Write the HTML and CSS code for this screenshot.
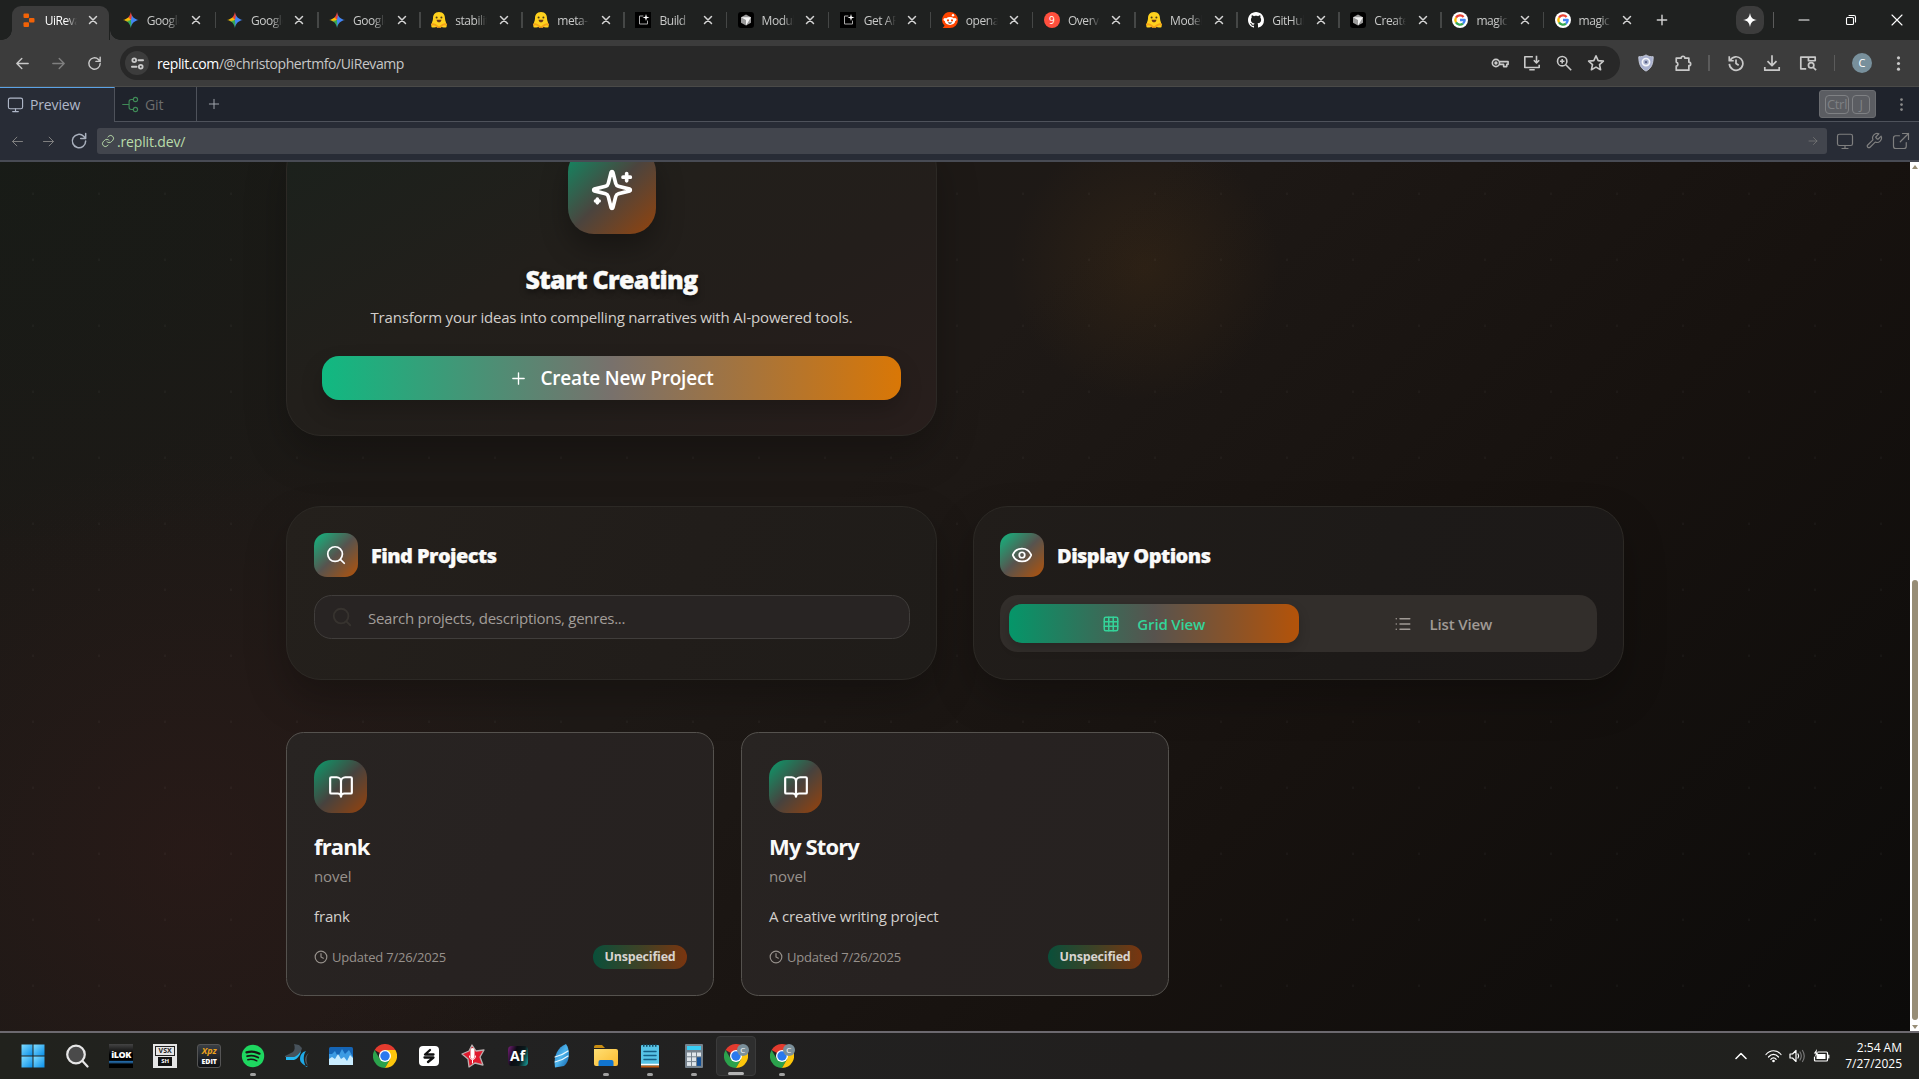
FILE: index.html
```html
<!DOCTYPE html>
<html lang="en">
<head>
<meta charset="utf-8">
<title>UiRevamp</title>
<link rel="stylesheet" href="styles.css">
</head>
<body>
<svg class="sprite" aria-hidden="true">
  <defs>
    <linearGradient id="win" x1="0" y1="0" x2="1" y2="1"><stop offset="0" stop-color="#7fdcff"/><stop offset="1" stop-color="#0a8fe8"/></linearGradient>
    <linearGradient id="feather" x1="0" y1="0" x2="1" y2="1"><stop offset="0" stop-color="#1c6fb8"/><stop offset=".5" stop-color="#4fb6ee"/><stop offset="1" stop-color="#0d5da8"/></linearGradient>
    <linearGradient id="folder" x1="0" y1="0" x2="1" y2="1"><stop offset="0" stop-color="#ffdf73"/><stop offset="1" stop-color="#fbb92e"/></linearGradient>
  </defs>
  <symbol id="x" viewBox="0 0 10 10"><path d="M1.500 1.500l7 7M8.500 1.500l-7 7"/></symbol>
  <symbol id="plus" viewBox="0 0 24 24"><path d="M12 4v16M4 12h16"/></symbol>
  <symbol id="left" viewBox="0 0 24 24"><path d="M20 12H4M11 5l-7 7 7 7"/></symbol>
  <symbol id="right" viewBox="0 0 24 24"><path d="M4 12h16M13 5l7 7-7 7"/></symbol>
  <symbol id="reload" viewBox="0 0 24 24"><path d="M20 12a8 8 0 1 1-2.400-5.700L20 9M20 3v6h-6"/></symbol>
  <symbol id="dots" viewBox="0 0 24 24"><g fill="currentColor" stroke="none"><circle cx="12" cy="4" r="2.200"/><circle cx="12" cy="12" r="2.200"/><circle cx="12" cy="20" r="2.200"/></g></symbol>
  <symbol id="search" viewBox="0 0 24 24"><circle cx="11" cy="11" r="8"/><path d="M21 21l-4.300-4.300"/></symbol>
  <symbol id="monitor" viewBox="0 0 24 24"><rect x="2" y="3" width="20" height="15" rx="2.500"/><path d="M8 22h8M12 18v4"/></symbol>
  <symbol id="book" viewBox="0 0 24 24"><path d="M12 7v14M3 18a1 1 0 0 1-1-1V4a1 1 0 0 1 1-1h5a4 4 0 0 1 4 4 4 4 0 0 1 4-4h5a1 1 0 0 1 1 1v13a1 1 0 0 1-1 1h-6a3 3 0 0 0-3 3 3 3 0 0 0-3-3z"/></symbol>
  <symbol id="clock" viewBox="0 0 24 24"><circle cx="12" cy="12" r="10"/><path d="M12 6v6l4 2"/></symbol>
  <symbol id="sparkles" viewBox="0 0 24 24"><path d="M9.940 15.500A2 2 0 0 0 8.500 14.060l-6.140-1.580a.5.5 0 0 1 0-.96L8.500 9.940A2 2 0 0 0 9.940 8.500l1.580-6.140a.5.5 0 0 1 .96 0l1.580 6.140a2 2 0 0 0 1.440 1.440l6.140 1.580a.5.5 0 0 1 0 .96l-6.140 1.580a2 2 0 0 0-1.440 1.440l-1.580 6.140a.5.5 0 0 1-.96 0zM20 3v4M22 5h-4M4 17v2M5 18H3"/></symbol>
  <symbol id="eye" viewBox="0 0 24 24"><path d="M2.060 12.350a1 1 0 0 1 0-.7 10.750 10.750 0 0 1 19.880 0 1 1 0 0 1 0 .7 10.750 10.750 0 0 1-19.880 0"/><circle cx="12" cy="12" r="3"/></symbol>
  <symbol id="grid" viewBox="0 0 24 24"><rect x="3" y="3" width="18" height="18" rx="2"/><path d="M3 9h18M3 15h18M9 3v18M15 3v18"/></symbol>
  <symbol id="list" viewBox="0 0 24 24"><path d="M8 5h13M8 12h13M8 19h13M3 5h.01M3 12h.01M3 19h.01"/></symbol>
  <symbol id="hf" viewBox="0 0 16 16"><g stroke="none"><path d="M8 0C3.500 0 2 3 2 6.500 2 9-.5 13 .6 15.200c2 .9 4-.4 7.400-.2 3.400-.2 5.400 1.100 7.400.2C16.500 13 14 9 14 6.500 14 3 12.500 0 8 0z" fill="#ffd21e"/><path d="M1 12.500c2-1 4 .5 6 2.500M15 12.500c-2-1-4 .5-6 2.500" stroke="#f5a31a" fill="none"/><circle cx="5.600" cy="5.500" r="1" fill="#4a3b1c"/><circle cx="10.400" cy="5.500" r="1" fill="#4a3b1c"/><path d="M5.600 7.800h4.800c0 3.400-4.800 3.400-4.800 0z" fill="#6b3a1c"/></g></symbol>
  <symbol id="build" viewBox="0 0 16 16"><path d="M0 0h16v16H0z" fill="#000" stroke="none"/><path d="M8 4H4.500v8h8V9" stroke="#aaa" stroke-width="1" fill="none"/><path d="M11 2l.8 2.700 2.700.8-2.700.8L11 9l-.8-2.700-2.700-.8 2.700-.8z" fill="#fff" stroke="none"/></symbol>
  <symbol id="cube" viewBox="0 0 16 16"><rect width="16" height="16" rx="3" fill="#000" stroke="none"/><path d="M8 2.500l5 2.700v5.600l-5 2.700-5-2.700V5.200z" fill="#9a9a9a" stroke="none"/><path d="M3 5.200h10L8 13.500V8z" fill="#f4f4f4" stroke="none"/></symbol>
  <symbol id="reddit" viewBox="0 0 16 16"><g stroke="none"><path d="M8 0a8 8 0 1 1 0 16H.6l2-2.200A8 8 0 0 1 8 0z" fill="#ff4500"/><ellipse cx="8" cy="9" rx="5.200" ry="3.900" fill="#fff"/><circle cx="3" cy="7.600" r="1.500" fill="#fff"/><circle cx="13" cy="7.600" r="1.500" fill="#fff"/><circle cx="11" cy="3.300" r="1.200" fill="#fff"/><circle cx="6" cy="8.400" r="1.100" fill="#ff4500"/><circle cx="10" cy="8.400" r="1.100" fill="#ff4500"/><path d="M5.800 10.600h4.400c-.8 1.500-3.600 1.500-4.400 0z" fill="#222"/></g></symbol>
  <symbol id="github" viewBox="0 0 16 16"><path stroke="none" fill="#fff" d="M8 0C3.580 0 0 3.580 0 8c0 3.540 2.290 6.530 5.470 7.590.4.070.55-.17.55-.38 0-.19-.01-.82-.01-1.490-2.010.37-2.530-.49-2.690-.94-.09-.23-.48-.94-.82-1.130-.28-.15-.68-.52-.01-.53.63-.01 1.080.58 1.230.82.72 1.210 1.870.87 2.330.66.070-.52.28-.87.51-1.070-1.780-.2-3.640-.89-3.640-3.950 0-.87.31-1.590.82-2.150-.08-.2-.36-1.020.08-2.120 0 0 .67-.21 2.200.82.64-.18 1.320-.27 2-.27s1.360.09 2 .27c1.530-1.040 2.200-.82 2.200-.82.44 1.100.16 1.920.08 2.120.51.56.82 1.270.82 2.150 0 3.070-1.870 3.750-3.650 3.950.29.25.54.73.54 1.480 0 1.070-.01 1.930-.01 2.200 0 .21.15.46.55.38A8 8 0 0 0 16 8c0-4.420-3.580-8-8-8z"/></symbol>
  <symbol id="google" viewBox="0 0 16 16"><circle cx="8" cy="8" r="8" fill="#fff" stroke="none"/><g fill="none" stroke-width="2.300" stroke-linecap="butt"><path d="M11.600 4.900A4.700 4.700 0 0 0 4 5.600" stroke="#ea4335"/><path d="M4 5.600a4.700 4.700 0 0 0 0 4.800" stroke="#fbbc05"/><path d="M4 10.400a4.700 4.700 0 0 0 7 1.200" stroke="#34a853"/><path d="M11 11.600A4.700 4.700 0 0 0 12.700 8H8" stroke="#4285f4"/></g></symbol>
  <symbol id="chrome" viewBox="0 0 24 24"><g stroke="none"><path d="M12 12L1.600 6A12 12 0 0 1 22.400 6z" fill="#e33b2e"/><path d="M1.600 6A12 12 0 0 0 12 24l5.200-9H6.800z" fill="#2ba24c"/><path d="M22.400 6A12 12 0 0 1 12 24l5.200-9L12 6z" fill="#fdc60c"/><circle cx="12" cy="12" r="6" fill="#fff"/><circle cx="12" cy="12" r="4.700" fill="#2a79ee"/></g></symbol>
</svg>

<header class="tabstrip">
  <div class="tab active"><svg class="fav" viewBox="0 0 16 16"><g fill="#f26207"><rect x="2.500" y="1.500" width="5.500" height="4.600" rx="1"/><rect x="8" y="5.900" width="5.500" height="4.600" rx="1"/><rect x="2.500" y="10.300" width="5.500" height="4.600" rx="1"/></g></svg><span class="name">UiRevamp</span><svg class="close"><use href="#x"/></svg></div>
  <div class="tab first"><i class="fav gem"></i><span class="name">Google</span><svg class="close"><use href="#x"/></svg></div>
  <div class="tab sep"><i class="fav gem"></i><span class="name">Google</span><svg class="close"><use href="#x"/></svg></div>
  <div class="tab sep"><i class="fav gem"></i><span class="name">Google</span><svg class="close"><use href="#x"/></svg></div>
  <div class="tab sep"><svg class="fav"><use href="#hf"/></svg><span class="name">stability</span><svg class="close"><use href="#x"/></svg></div>
  <div class="tab sep"><svg class="fav"><use href="#hf"/></svg><span class="name">meta-l</span><svg class="close"><use href="#x"/></svg></div>
  <div class="tab sep"><svg class="fav"><use href="#build"/></svg><span class="name">Build | b</span><svg class="close"><use href="#x"/></svg></div>
  <div class="tab sep"><svg class="fav"><use href="#cube"/></svg><span class="name">Modul</span><svg class="close"><use href="#x"/></svg></div>
  <div class="tab sep"><svg class="fav"><use href="#build"/></svg><span class="name">Get API</span><svg class="close"><use href="#x"/></svg></div>
  <div class="tab sep"><svg class="fav"><use href="#reddit"/></svg><span class="name">openai</span><svg class="close"><use href="#x"/></svg></div>
  <div class="tab sep"><span class="fav nine">9</span><span class="name">Overvi</span><svg class="close"><use href="#x"/></svg></div>
  <div class="tab sep"><svg class="fav"><use href="#hf"/></svg><span class="name">Models</span><svg class="close"><use href="#x"/></svg></div>
  <div class="tab sep"><svg class="fav"><use href="#github"/></svg><span class="name">GitHub</span><svg class="close"><use href="#x"/></svg></div>
  <div class="tab sep"><svg class="fav"><use href="#cube"/></svg><span class="name">Create</span><svg class="close"><use href="#x"/></svg></div>
  <div class="tab sep"><svg class="fav"><use href="#google"/></svg><span class="name">magic</span><svg class="close"><use href="#x"/></svg></div>
  <div class="tab sep"><svg class="fav"><use href="#google"/></svg><span class="name">magic</span><svg class="close"><use href="#x"/></svg></div>
  <div class="newtab"><svg width="14" height="14"><use href="#plus"/></svg></div>
  <div class="winctl">
    <div class="spark"><svg width="14" height="14" viewBox="0 0 24 24"><path d="M12 0c1.500 8 4 10.500 12 12-8 1.500-10.500 4-12 12-1.500-8-4-10.500-12-12 8-1.500 10.500-4 12-12z" fill="#fff"/></svg></div>
    <i class="vbar"></i>
    <svg class="wc" viewBox="0 0 12 12"><path d="M1 6h10"/></svg>
    <svg class="wc" viewBox="0 0 12 12"><rect x="1.500" y="3.500" width="7" height="7" rx="1"/><path d="M4 1.500h5a1.500 1.500 0 0 1 1.500 1.500v5"/></svg>
    <svg class="wc" viewBox="0 0 12 12"><path d="M1 1l10 10M11 1L1 11"/></svg>
  </div>
</header>

<div class="toolbar">
  <div class="nav">
    <svg width="17" height="17"><use href="#left"/></svg>
    <svg width="17" height="17" class="dim"><use href="#right"/></svg>
    <svg width="17" height="17"><use href="#reload"/></svg>
  </div>
  <div class="omnibox">
    <span class="site"><svg width="13" height="13" viewBox="0 0 14 14"><circle cx="3.500" cy="3.500" r="2"/><path d="M8 3.500h5M1 10.500h5"/><circle cx="10.500" cy="10.500" r="2"/></svg></span>
    <span class="address"><b>replit.com</b>/@christophertmfo/UiRevamp</span>
    <span class="omni-icons">
      <svg viewBox="0 0 20 20"><circle cx="5.500" cy="10" r="4"/><circle cx="5.500" cy="10" r="1"/><path d="M9.500 8.500H19v3h-1.500v2.500H14v-2.500H9.500"/></svg>
      <svg viewBox="0 0 20 20"><path d="M11 3H2v12h16v-3M7 17.500h6M15 2v8M12 7l3 3 3-3"/></svg>
      <svg viewBox="0 0 20 20"><circle cx="8" cy="8" r="5.200"/><path d="M12 12l6 6M5.500 8h5M8 5.500v5"/></svg>
      <svg viewBox="0 0 20 20"><path d="M10 2l2.400 5.300 5.800.6-4.300 3.900 1.200 5.700L10 14.600l-5.100 2.900 1.200-5.700L1.800 7.900l5.800-.6z"/></svg>
    </span>
  </div>
  <div class="exts">
    <svg class="e1" viewBox="0 0 20 20"><path d="M10 1c3 2 5 2 8 2 0 8-2 13-8 16C4 16 2 11 2 3c3 0 5 0 8-2z" fill="#a9b1cf" stroke="#c9cede" stroke-width="1"/><circle cx="10" cy="9" r="4" fill="none" stroke="#f4f5fa"/><circle cx="10" cy="9" r="1.300" fill="#5b6385" stroke="none"/></svg>
    <svg class="e2" viewBox="0 0 20 20"><path d="M2.500 4.500H8a2 2 0 0 1 4 0h4.500V9a2 2 0 0 1 0 4v5h-14v-4.500a2.300 2.300 0 0 0 0-4.500z"/></svg>
    <i class="vbar"></i>
    <svg class="e3" viewBox="0 0 20 20"><path d="M3.500 7A7.500 7.500 0 1 1 2.600 11M2.500 2.500v5h5M10 6v4.500l3 2"/></svg>
    <svg class="e4" viewBox="0 0 20 20"><path d="M10 1.500v11M5 8l5 5 5-5M2 14.500V18h16v-3.500"/></svg>
    <svg class="e5" viewBox="0 0 20 20"><path d="M8 16.500H2v-13h16V8M10.500 3.500v4H18"/><circle cx="13.500" cy="12.500" r="3"/><path d="M15.700 14.700L19 18"/></svg>
    <i class="vbar"></i>
    <span class="avatar">C</span>
    <svg class="e6"><use href="#dots"/></svg>
  </div>
</div>

<div class="panes">
  <div class="pane current"><svg width="17" height="17"><use href="#monitor"/></svg>Preview</div>
  <div class="pane git"><svg width="17" height="17" viewBox="0 0 24 24"><path d="M1 12h9M10 12V8q0-3 3-3h3M10 12v4q0 3 3 3h3"/><circle cx="19" cy="5" r="3"/><circle cx="19" cy="19" r="3"/></svg>Git</div>
  <div class="add"><svg width="14" height="14"><use href="#plus"/></svg></div>
  <div class="keys"><kbd>Ctrl</kbd><kbd>J</kbd></div>
  <svg class="more"><use href="#dots"/></svg>
</div>

<div class="urlrow">
  <svg width="15" height="15" class="dim"><use href="#left"/></svg>
  <svg width="15" height="15" class="dim"><use href="#right"/></svg>
  <svg width="20" height="20"><use href="#reload"/></svg>
  <div class="field"><svg width="14" height="14" viewBox="0 0 24 24"><path d="M10 13a5 5 0 0 0 7.500.5l3-3a5 5 0 0 0-7-7L11.800 5.200M14 11a5 5 0 0 0-7.500-.5l-3 3a5 5 0 0 0 7 7l1.700-1.700"/></svg><span>.replit.dev/</span><svg class="go" width="12" height="12"><use href="#right"/></svg></div>
  <svg width="18" height="18" class="dim"><use href="#monitor"/></svg>
  <svg width="18" height="18" class="dim" viewBox="0 0 24 24"><path d="M14.700 6.300a1 1 0 0 0 0 1.400l1.600 1.600a1 1 0 0 0 1.400 0l3.800-3.800a6 6 0 0 1-7.900 7.900l-6.900 6.900a2.120 2.120 0 0 1-3-3l6.900-6.900a6 6 0 0 1 7.900-7.900z"/></svg>
  <svg width="18" height="18" class="dim" viewBox="0 0 24 24"><path d="M14 2h8v8M22 2L11 13M10 5H5a3 3 0 0 0-3 3v11a3 3 0 0 0 3 3h11a3 3 0 0 0 3-3v-5"/></svg>
</div>

<div class="viewport">
  <main class="app">
    <section class="hero glass">
      <div class="tile big"><svg width="44" height="44"><use href="#sparkles"/></svg></div>
      <h1>Start Creating</h1>
      <p>Transform your ideas into compelling narratives with AI-powered tools.</p>
      <button class="create"><svg width="17" height="17"><use href="#plus"/></svg><span>Create New Project</span></button>
    </section>
    <div class="controls">
      <section class="glass panel">
        <div class="head"><div class="tile small"><svg width="22" height="22"><use href="#search"/></svg></div><h2>Find Projects</h2></div>
        <div class="searchbox"><svg width="22" height="22"><use href="#search"/></svg><span>Search projects, descriptions, genres...</span></div>
      </section>
      <section class="glass panel">
        <div class="head"><div class="tile small"><svg width="22" height="22"><use href="#eye"/></svg></div><h2>Display Options</h2></div>
        <div class="toggle">
          <div class="opt on"><svg width="18" height="18"><use href="#grid"/></svg><span>Grid View</span></div>
          <div class="opt"><svg width="18" height="18"><use href="#list"/></svg><span>List View</span></div>
        </div>
      </section>
    </div>
    <div class="projects">
      <article class="project">
        <div class="tile mid"><svg width="26" height="26"><use href="#book"/></svg></div>
        <h3>frank</h3>
        <div class="kind">novel</div>
        <div class="desc">frank</div>
        <footer><span class="upd"><svg width="14" height="14"><use href="#clock"/></svg>Updated 7/26/2025</span><span class="badge">Unspecified</span></footer>
      </article>
      <article class="project">
        <div class="tile mid"><svg width="26" height="26"><use href="#book"/></svg></div>
        <h3>My Story</h3>
        <div class="kind">novel</div>
        <div class="desc">A creative writing project</div>
        <footer><span class="upd"><svg width="14" height="14"><use href="#clock"/></svg>Updated 7/26/2025</span><span class="badge">Unspecified</span></footer>
      </article>
    </div>
  </main>
  <div class="scrollbar"><i class="up"></i><i class="thumb"></i><i class="down"></i></div>
</div>

<div class="taskbar">
  <div class="apps">
    <div><svg viewBox="0 0 24 24"><g fill="url(#win)"><rect x=".5" y=".5" width="11" height="11"/><rect x="12.500" y=".5" width="11" height="11"/><rect x=".5" y="12.500" width="11" height="11"/><rect x="12.500" y="12.500" width="11" height="11"/></g></svg></div>
    <div><svg viewBox="0 0 24 24"><g stroke="#e6e6e6" stroke-width="2.200"><circle cx="11" cy="10.500" r="8.800" fill="#4a4a4a" stroke="#e6e6e6"/><path d="M17.500 17l5 5.500"/></g></svg></div>
    <div><span class="ico ilok">iLOK</span></div>
    <div><span class="ico ver"><b>VSX</b><i>SH</i></span></div>
    <div><span class="ico xpl"><b>Xpz</b><i>EDIT</i></span></div>
    <div class="run"><svg viewBox="0 0 24 24"><circle cx="12" cy="12" r="11.200" fill="#1ed760"/><g fill="none" stroke="#191414"><path d="M5.500 8.400c4.500-1.300 9-.9 13 1.300" stroke-width="2.200"/><path d="M6.200 12.200c3.800-1 7.500-.6 11 1.300" stroke-width="1.900"/><path d="M6.800 15.700c3.200-.7 6-.4 9 1.100" stroke-width="1.500"/></g></svg></div>
    <div><svg viewBox="0 0 24 24"><path d="M9 0l5 1 3 3c-1 5-4 8-8 9H0v-1l8-4c2-2 2-5 1-8z" fill="#47525b"/><path d="M1 13h8c3-1 5-3 7-6-1 5-4 8-7 9H1z" fill="#24b8f2"/><path d="M21 7c-3 4-3 10 0 16h2c-4-2-8-4-8-8 0-4 2-7 6-8z" fill="#1fa9e6"/><path d="M24 9c-3 3-3 8-1 13-4-4-4-10 1-13z" fill="#4d5963"/></svg></div>
    <div><svg viewBox="0 0 24 24"><rect y="3" width="24" height="18" rx="1.500" fill="#1565b5"/><path d="M0 10h3l3-3 3 6 4-8 3 5 4-4 4 7v8H0z" fill="#3c9be3"/><path d="M0 15l3-2 3 2 3-5 3 5 3-2 3 4 3-6 3 3v7H0z" fill="#c9ecff"/></svg></div>
    <div><svg><use href="#chrome"/></svg></div>
    <div><svg viewBox="0 0 24 24"><rect x="2" y="2" width="20" height="20" rx="4" fill="#fff"/><path d="M13 6L8 10.500h8.500M11 18l5.500-4.500H7.500" fill="none" stroke="#111" stroke-width="2.300"/></svg></div>
    <div><svg viewBox="0 0 24 24"><path d="M11 1l4 6 8-1-4 7 3 8-8-2-6 4-1-8-6-5 7-3z" fill="#e01b2f" stroke="#b9b0b0" stroke-width="1.300"/><rect x="9.500" y="4" width="4" height="11" rx="2" fill="#fff"/><path d="M8.500 12c0 5 6 5 6 0M11.500 16v3" fill="none" stroke="#fff" stroke-width="1"/></svg></div>
    <div><span class="ico af">Af</span></div>
    <div><svg viewBox="0 0 24 24"><path d="M16 0c4 6 4 14 0 20l-2 2-9 1.500C3 12 8 3 16 0z" fill="url(#feather)"/><path d="M5 13c4-1 9-3 13-6M5 18c5-1 9-3 13-6" fill="none" stroke="#e8f7ff" stroke-width="1.200"/></svg></div>
    <div class="run"><svg viewBox="0 0 24 24"><path d="M0 3q0-2 2-2h6l3 3h-11z" fill="#c98d12"/><path d="M0 5h22q2 0 2 2v13q0 2-2 2H2q-2 0-2-2z" fill="url(#folder)"/><path d="M4.500 22v-4q0-2 2-2h11q2 0 2 2v4z" fill="#1174cf"/></svg></div>
    <div class="run"><svg viewBox="0 0 24 24"><rect x="3" y="1" width="18" height="22" rx="1" fill="#57c3e6"/><path d="M5 1.500h14" stroke="#134a63" stroke-width="2.500" stroke-dasharray="1.500 1.500" stroke-linecap="butt"/><path d="M6 7.500h12M6 11.500h12M6 15.500h12" stroke="#145f86" stroke-width="1.500"/><path d="M3 20.500h18" stroke="#fff" stroke-width="1.500" stroke-linecap="butt"/><path d="M3 22.500h18" stroke="#c05a12" stroke-width="2" stroke-linecap="butt"/></svg></div>
    <div class="run"><svg viewBox="0 0 24 24"><rect x="3" width="18" height="24" rx="1" fill="#75818c"/><rect x="5" y="2" width="14" height="4" fill="#39cdf5"/><g fill="#dfe5ea"><rect x="5" y="8.500" width="4" height="3.800"/><rect x="10" y="8.500" width="4" height="3.800"/><rect x="15" y="8.500" width="4" height="3.800"/><rect x="5" y="13.300" width="4" height="3.800"/><rect x="10" y="13.300" width="4" height="3.800"/><rect x="5" y="18.100" width="4" height="3.800"/><rect x="10" y="18.100" width="4" height="3.800"/></g><rect x="15" y="13.300" width="4" height="8.600" fill="#124f96"/></svg></div>
    <div class="run focus"><svg><use href="#chrome"/></svg><em>C</em></div>
    <div class="run"><svg><use href="#chrome"/></svg><em>C</em></div>
  </div>
  <div class="tray">
    <svg class="chev" width="12" height="12" viewBox="0 0 12 12"><path d="M1 8.500l5-5 5 5" stroke-width="1.500"/></svg>
    <svg class="wifi" width="17" height="14" viewBox="0 0 17 14"><path d="M1 5.500c4-5 11-5 15 0M3.500 8c3-3.500 7-3.500 10 0M5.800 10.300c1.500-2 4-2 5.400 0"/><circle cx="8.500" cy="12" r="1.300" fill="#fff" stroke="none"/></svg>
    <svg class="vol" width="17" height="14" viewBox="0 0 17 14"><path d="M1 5h2.500L7 1.500v11L3.500 9H1zM9 5q1.300 2 0 4"/><path d="M11 3q2.600 4 0 8M13.500 1.500q3.500 5.500 0 11" stroke="#777"/></svg>
    <svg class="bat" width="17" height="14" viewBox="0 0 17 14"><path d="M5 3h8.500q1 0 1 1v7q0 1-1 1H2.500q-1 0-1-1V8M15.800 6v3"/><path d="M3.500 5h9v5h-9z" fill="#fff" stroke="none"/><path d="M4 0L.8 4.500h2L2 8l3.500-4.500h-2z" fill="#fff" stroke="none"/></svg>
    <div class="time"><span>2:54 AM</span><span>7/27/2025</span></div>
  </div>
</div>
</body>
</html>
```
FILE: styles.css
```css
* { box-sizing: border-box; }
body {
  margin: 0;
  width: 1919px;
  height: 1079px;
  overflow: hidden;
  display: flex;
  flex-direction: column;
  background: #0f0d0c;
  font-family: "Open Sans", "Noto Sans", sans-serif;
}
.sprite { position: absolute; width: 0; height: 0; }
svg { flex: none; fill: none; stroke: currentColor; stroke-width: 2; stroke-linecap: round; stroke-linejoin: round; display: block; }
svg [fill^="#"]:not([stroke]), svg [fill^="url"] { stroke: none; }
h1, h2, h3, p { margin: 0; }

/* browser tabs */
.tabstrip { height: 40px; flex: none; display: flex; background: #1f2120; padding-left: 10.700px; color: #c8c9c8; }
.tab { width: 102.140px; flex: none; display: flex; align-items: center; padding-left: 12px; position: relative; }
.tab .fav { width: 16px; height: 16px; margin-right: 8px; flex: none; }
.tab .name { width: 32px; overflow: hidden; white-space: nowrap; font-size: 12px; letter-spacing: -.45px; line-height: 18px; margin-top: 2px; -webkit-mask-image: linear-gradient(90deg, #000 65%, transparent); mask-image: linear-gradient(90deg, #000 65%, transparent); }
.tab .close { width: 10px; height: 10px; margin-left: 11.500px; stroke-width: 1.500; color: #d4d4d4; }
.tab.sep::before { content: ""; position: absolute; left: 0; top: 12px; width: 1.500px; height: 16px; background: #454746; }
.tab.first { padding-left: 10px; }
.tab.first .close { margin-left: 12.500px; }
.tab.active { color: #fff; padding-left: 10px; z-index: 1; }
.tab.active::before { content: ""; position: absolute; z-index: -1; left: 1px; top: 6px; width: 97.500px; height: 34px; background: #3c3c3c; border-radius: 9px 9px 0 0; }
.tab.active::after { content: ""; position: absolute; z-index: -2; left: -9px; bottom: 0; width: 118px; height: 10px; background: radial-gradient(circle at 0 0, transparent 9.500px, #3c3c3c 10px) left / 10px 10px no-repeat, radial-gradient(circle at 100% 0, transparent 9.500px, #3c3c3c 10px) right / 10px 10px no-repeat; }
.gem {
  background: conic-gradient(#ea4335, #4285f4 25deg 165deg, #34a853 190deg 235deg, #fbbc05 270deg 300deg, #ea4335 335deg);
  clip-path: path("M8 0C8.700 4.500 11.500 7.300 16 8 11.500 8.700 8.700 11.500 8 16 7.300 11.500 4.500 8.700 0 8 4.500 7.300 7.300 4.500 8 0z");
}
.nine { background: #ff4f3d; border-radius: 50%; color: #fff; font-size: 10px; text-align: center; line-height: 16px; }
.newtab { display: flex; align-items: center; margin-left: 10px; }
.newtab svg { color: #d0d0d0; stroke-width: 2.500; }
.winctl { margin-left: auto; display: flex; align-items: center; color: #fff; }
.spark { width: 28px; height: 28px; border-radius: 10px; background: #3c3c3c; display: grid; place-items: center; margin-right: 9px; }
.vbar { width: 1.500px; height: 16px; background: #5b5b5b; }
.wc { width: 12px; height: 12px; stroke-width: 1.100; margin-left: 34.500px; }
.winctl .wc:first-of-type { margin-left: 24px; }
.winctl .wc:last-child { margin-right: 16px; }

/* browser toolbar */
.toolbar { height: 47px; flex: none; display: flex; align-items: center; background: #3c3c3c; border-bottom: 1px solid #4a4a48; color: #c9c9c9; }
.nav { width: 120px; padding-left: 13.500px; display: flex; gap: 19px; }
.dim { color: #7f7f7f; }
.omnibox { width: 1500px; height: 34px; border-radius: 17px; background: #282828; display: flex; align-items: center; padding: 0 15px 0 5px; }
.site { width: 24px; height: 24px; border-radius: 50%; background: #3c3c3c; display: grid; place-items: center; margin-right: 8px; }
.address { font-size: 14px; letter-spacing: -.41px; color: #c7c7c7; }
.address b { font-weight: 400; color: #fff; }
.omni-icons { margin-left: auto; display: flex; gap: 14px; }
.omni-icons svg { width: 18px; height: 18px; stroke-width: 1.800; stroke-linecap: butt; }
.exts { flex: 1; display: flex; align-items: center; }
.exts svg { width: 18px; height: 18px; stroke-width: 1.900; stroke-linecap: butt; }
.e1 { margin-left: 17px; } .e2 { margin: 0 16px 0 19px; } .e3 { margin-left: 17px; } .e4 { margin-left: 18px; } .e5 { margin: 0 17px 0 18px; }
.exts .e6 { width: 17px; height: 17px; margin-left: 18px; }
.avatar { width: 20px; height: 20px; border-radius: 50%; background: #78909c; color: #fff; font-size: 11px; line-height: 20px; text-align: center; margin-left: 17px; }

/* workspace panes */
.panes { height: 35px; flex: none; display: flex; align-items: center; background: #1f232c; border-bottom: 1px solid #4e525b; font-size: 14px; }
.pane { height: 35px; display: flex; align-items: center; gap: 6px; padding-left: 8px; border-right: 1.500px solid #4e525b; letter-spacing: -.15px; }
.pane.current { width: 115px; background: #282c36; border-top: 1px solid #5ba3e6; color: #b0b8c9; padding-left: 7px; }
.pane svg, .panes .add svg { stroke-width: 1.600; }
.pane.git { width: 82px; color: #6d6d6d; padding-left: 7px; }
.pane.git svg { color: #3f8a57; }
.add { margin-left: 10px; color: #a9adb5; }
.keys { margin-left: auto; width: 57px; height: 28px; background: #5b5d62; border: 1px solid #6a6c70; border-radius: 3px; display: flex; align-items: center; justify-content: center; gap: 3px; }
kbd { font: 13px "Open Sans", sans-serif; color: #7f8184; border: 1px solid #7f8184; border-radius: 4px; height: 19px; line-height: 17px; padding: 0 1px; min-width: 18px; text-align: center; letter-spacing: -.3px; }
.panes .more { width: 15px; height: 15px; margin: 0 10px 0 18px; color: #8a8a8a; }
.urlrow { height: 40px; flex: none; display: flex; align-items: center; background: #282c36; border-bottom: 2px solid #484b54; color: #a9b0bd; padding: 0 9px 0 10px; }
.urlrow svg { stroke-width: 1.600; }
.urlrow > svg:nth-child(2) { margin-left: 16px; }
.urlrow > svg:nth-child(3) { margin: 0 8px 0 13px; stroke-width: 1.800; }
.field { flex: 1; height: 26px; border-radius: 3px; background: #42454d; display: flex; align-items: center; padding: 0 8px 0 4px; color: #b9dcaa; font-size: 14px; gap: 2px; letter-spacing: -.15px; margin-right: 9px; }
.field .go { margin-left: auto; color: #777; }
.field + svg { margin-right: 11px; }
.field + svg + svg { margin-right: 9px; }

/* application page */
.viewport { flex: 1; min-height: 0; display: flex; overflow: hidden; border-bottom: 2px solid #6c696f; }
.app {
  flex: 1; overflow: hidden; padding: 0 285px 0 286px; color: #fafaf9;
  background:
    radial-gradient(circle at 33px 31.700px, rgba(255,255,255,.03) 1px, transparent 1.500px) 0 0 / 66px 66px,
    radial-gradient(circle 135px at 1145px 105px, rgba(130,80,20,.15), transparent),
    radial-gradient(circle 400px at 190px 690px, rgba(90,30,30,.17), transparent),
    radial-gradient(ellipse 560px 420px at 0 0, rgba(10,40,28,.17), transparent),
    linear-gradient(135deg, #1b1916 0%, #1e1916 42%, #17120f 68%, #0c0b0a 100%);
}
.glass { border: 1px solid #2c2925; border-radius: 35px; box-shadow: 0 18px 40px rgba(0,0,0,.25); }
.tile { display: grid; place-items: center; color: #fff; }
.big { width: 88px; height: 88px; border-radius: 26px; background: linear-gradient(135deg, #0b8f66, #4b443e 50%, #93430c); box-shadow: 0 14px 28px rgba(0,0,0,.3); }
.small { width: 44px; height: 44px; border-radius: 13px; background: linear-gradient(135deg, #10b981, #57534e 50%, #b45309); }
.mid { width: 53px; height: 53px; border-radius: 17.600px; background: linear-gradient(135deg, #0a9c6c, #47423e 50%, #97420b); }
.hero { width: 651px; height: 302px; margin-top: -28px; background: linear-gradient(150deg, #1b211c 0%, #221f1b 40%, #231e1b 65%, #281e1c 100%); padding: 11px 35px 0; display: flex; flex-direction: column; align-items: center; }
.hero h1 { font-size: 25px; font-weight: 800; letter-spacing: -.7px; line-height: 34px; margin-top: 28px; text-shadow: 0 3px 6px rgba(0,0,0,.5); -webkit-text-stroke: .4px #fafaf9; }
.hero p { font-size: 15px; letter-spacing: -.2px; line-height: 24px; color: #d2cecb; margin-top: 9px; white-space: nowrap; }
.create { align-self: stretch; height: 44px; border: 0; border-radius: 17px; margin-top: 27px; padding: 0; background: linear-gradient(90deg, #10b981, #78716c 50%, #d97706); color: #fff; display: flex; align-items: center; justify-content: center; gap: 14px; font: 600 19px "Open Sans", sans-serif; letter-spacing: -.2px; box-shadow: 0 10px 22px rgba(0,0,0,.2); }
.create svg { stroke-width: 1.900; }
.controls { display: grid; grid-template-columns: 651px 651px; gap: 36px; margin-top: 70px; }
.panel { height: 174px; padding: 26px 26px 26px 27px; background: linear-gradient(110deg, #24201c, #211d1a 60%, #1f1c19); }
.panel + .panel { padding-left: 26px; background: linear-gradient(110deg, #211d1a, #1d1a18 60%, #1c1918); }
.head { display: flex; align-items: center; gap: 13px; }
.head h2 { font-size: 20px; font-weight: 800; letter-spacing: -.55px; line-height: 28px; margin-top: 1px; -webkit-text-stroke: .25px #fafaf9; }
.head svg { stroke-width: 1.900; }
.searchbox { height: 44px; margin-top: 18px; border: 1px solid #403d3b; border-radius: 17.600px; background: #282423; display: flex; align-items: center; padding-left: 16px; gap: 15px; font-size: 15px; letter-spacing: -.27px; color: #a29d99; }
.searchbox span { padding-top: 2px; }
.searchbox svg { color: #37332f; }
.toggle { height: 57px; margin-top: 18px; border-radius: 18px; background: #322e2b; display: grid; grid-template-columns: 1fr 1fr; padding: 9px; }
.opt { border-radius: 13px; display: flex; align-items: center; justify-content: center; gap: 17px; font-size: 15px; font-weight: 600; color: #a09a95; letter-spacing: -.15px; }
.opt span { padding-top: 1px; }
.opt.on { color: #34d399; background: linear-gradient(90deg, #059669, #57534e 50%, #b45309); box-shadow: 0 5px 12px rgba(0,0,0,.2); }
.projects { display: grid; grid-template-columns: 428px 428px; gap: 27px; margin-top: 52px; }
.project { height: 264px; border: 1px solid #55524e; border-radius: 17.600px; background: linear-gradient(115deg, #282422, #272221 50%, #262220); padding: 27px 26px 0 27px; }
.project h3 { font-size: 22px; font-weight: 700; letter-spacing: -.85px; line-height: 28px; margin-top: 19px; }
.kind { font-size: 15px; line-height: 22px; color: #97918c; margin-top: 5px; letter-spacing: -.1px; }
.desc { font-size: 15px; line-height: 22px; color: #d3cfcc; margin-top: 17.500px; letter-spacing: -.15px; }
.project footer { display: flex; justify-content: space-between; align-items: center; margin-top: 18.500px; }
.upd { display: flex; gap: 4px; align-items: center; font-size: 13px; letter-spacing: -.2px; color: #97918c; }
.badge { height: 24px; width: 94px; border-radius: 12px; background: linear-gradient(90deg, #0a4f3a, #3e4226 50%, #7a350f); color: #d8d3cf; font-size: 12.500px; font-weight: 700; letter-spacing: -.2px; text-align: center; line-height: 24px; }
.scrollbar { width: 9px; background: #fff; display: flex; flex-direction: column; align-items: center; }
.thumb { width: 6px; height: 440px; border-radius: 3px; background: #978d76; margin-top: 411px; }
.up { border: 3px solid transparent; border-top: 0; border-bottom: 4px solid #978d76; margin-top: 3px; }
.down { border: 3px solid transparent; border-bottom: 0; border-top: 4px solid #978d76; margin-top: 5px; }

/* desktop taskbar */
.taskbar { height: 46px; flex: none; display: flex; justify-content: space-between; background: linear-gradient(90deg, #21221d, #222 25%, #211f1e 60%, #20211e); }
.apps { display: flex; padding-left: 11px; }
.apps > div { width: 44.050px; display: grid; place-items: center; position: relative; }
.apps svg { width: 24px; height: 24px; stroke: none; }
.ico { width: 24px; height: 24px; display: block; font-style: normal; overflow: hidden; text-align: center; color: #fff; }
.ilok { background: linear-gradient(#444, #000 45%, #000 68%, #2a7cc4 74%, #000 84%); font-size: 9px; font-weight: 800; line-height: 21px; letter-spacing: -.5px; }
.ico.ver { background: #e5e5e5; color: #222; padding: 2px; display: flex; flex-direction: column; align-items: center; gap: 1px; }
.ver b { font-size: 7px; line-height: 8px; border: 1px solid #222; width: 20px; height: 10px; }
.ver i { width: 14px; height: 9px; background: #111; color: #fff; font: 700 6px/9px "Open Sans", sans-serif; }
.ico.xpl { background: linear-gradient(#3a3f45, #0d0f12); border: 1px solid #555; border-radius: 3px; display: flex; flex-direction: column; gap: 2px; }
.xpl b { color: #eaa21c; font-size: 9px; line-height: 11px; font-style: italic; }
.xpl i { font: 800 7px/8px "Open Sans", sans-serif; }
.af { width: 20px; height: 20px; border-radius: 4px; background: linear-gradient(110deg, #7a1f7c, #0b0b12 35%, #0b1a1c 65%, #1aa7a4); font-size: 14px; font-weight: 700; line-height: 19px; }
.run::after { content: ""; position: absolute; bottom: 3px; left: 19px; width: 6px; height: 3px; border-radius: 2px; background: #a0a0a0; }
.focus { background: #2e2e2e; border: 1px solid #3b3b3b; border-radius: 4px; margin: 3px 4px 3px 0; }
.apps > .focus { width: 40px; }
.focus::after { left: 11px; width: 16px; bottom: 0; background: #b5b5b5; }
.run em { position: absolute; right: 9px; top: 11px; width: 12px; height: 12px; border-radius: 50%; background: #7b909b; color: #fff; font: 8px/12px "Open Sans", sans-serif; text-align: center; }
.focus em { right: 6px; top: 7px; }
.tray { display: flex; align-items: center; color: #fff; padding-right: 17px; }
.tray svg { stroke-width: 1.200; }
.wifi { margin-left: 18px; } .vol { margin-left: 7px; } .bat { margin-left: 7px; }
.time { display: flex; flex-direction: column; align-items: flex-end; width: 72px; font-size: 12px; line-height: 16px; }
```
